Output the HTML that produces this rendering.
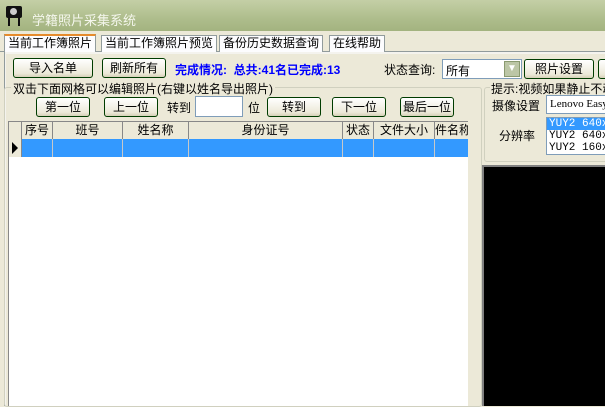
<!DOCTYPE html>
<html><head><meta charset="utf-8"><style>
*{margin:0;padding:0;box-sizing:border-box}
body{width:605px;height:406px;overflow:hidden;background:#ece9d8;font-family:"Liberation Sans","Noto Sans CJK SC","WenQuanYi Zen Hei",sans-serif;font-size:12px;position:relative;color:#000}
.a{position:absolute;white-space:nowrap}
.title{left:0;top:0;width:605px;height:31px;background:linear-gradient(#c4cfa6,#aebd8c 60%,#a3b380);}
.btn{position:absolute;height:20px;border:1px solid #003c00;border-radius:3px;background:linear-gradient(#fff,#ece9d8 80%,#d6d0b8);text-align:center;line-height:18px;font-size:12px}
.tab{position:absolute;top:35px;height:17px;border:1px solid #919b9c;border-bottom:none;background:#fcfcfe;line-height:15px;padding:0 3px;font-size:12px}
.grp{position:absolute;border:1px solid #d0d0bf;border-radius:3px}
.hd{position:absolute;top:0;height:17px;border-right:1px solid #888;text-align:center;line-height:16px;background:#ece9d8}
.cl{position:absolute;top:17px;height:18px;border-right:1px solid #c8c8c8}
</style></head><body>
<div class="a title"></div>
<div class="a" style="left:6px;top:6px;width:16px;height:12px;background:#111;border-radius:2px"></div>
<div class="a" style="left:10px;top:8px;width:7px;height:7px;background:#ccc;border-radius:50%"></div>
<div class="a" style="left:8px;top:18px;width:2px;height:8px;background:#111"></div>
<div class="a" style="left:18px;top:18px;width:2px;height:8px;background:#111"></div>
<div class="a" style="left:32px;top:10px;color:#f4f6ec;font-size:13px">学籍照片采集系统</div>
<div class="a" style="left:0;top:51px;width:605px;height:1px;background:#919b9c"></div>
<div class="tab" style="left:4px;top:34px;height:18px;border-top:2px solid #e68b2c;z-index:2">当前工作簿照片</div>
<div class="tab" style="left:101px">当前工作簿照片预览</div>
<div class="tab" style="left:219px">备份历史数据查询</div>
<div class="tab" style="left:329px">在线帮助</div>
<div class="a" style="left:4px;top:52px;width:601px;height:354px;border-left:1px solid #919b9c;background:#f4f3ee"></div>
<div class="a" style="left:6px;top:54px;width:599px;height:352px;background:#ece9d8"></div>
<div class="btn" style="left:13px;top:58px;width:80px">导入名单</div>
<div class="btn" style="left:102px;top:58px;width:64px">刷新所有</div>
<div class="a" style="left:175px;top:61px;color:#0000ff;font-weight:bold;font-size:12px">完成情况:&nbsp; 总共:41名已完成:13</div>
<div class="a" style="left:384px;top:61px">状态查询:</div>
<div class="a" style="left:442px;top:59px;width:80px;height:20px;background:#fff;border:1px solid #7f9db9;padding:2px 3px">所有</div>
<div class="a" style="left:504px;top:61px;width:16px;height:16px;background:#bcc6a6;border:1px solid #8a9a70;color:#fff;text-align:center;line-height:14px;font-size:10px">▼</div>
<div class="btn" style="left:524px;top:59px;width:70px">照片设置</div>
<div class="btn" style="left:598px;top:59px;width:20px"></div>
<div class="grp" style="left:4px;top:87px;width:478px;height:320px"></div>
<div class="a" style="left:11px;top:80px;background:#ece9d8;padding:0 2px">双击下面网格可以编辑照片(右键以姓名导出照片)</div>
<div class="btn" style="left:36px;top:97px;width:54px">第一位</div>
<div class="btn" style="left:104px;top:97px;width:54px">上一位</div>
<div class="a" style="left:167px;top:99px">转到</div>
<div class="a" style="left:195px;top:96px;width:48px;height:21px;background:#fff;border:1px solid #7f9db9"></div>
<div class="a" style="left:248px;top:99px">位</div>
<div class="btn" style="left:267px;top:97px;width:54px">转到</div>
<div class="btn" style="left:332px;top:97px;width:54px">下一位</div>
<div class="btn" style="left:400px;top:97px;width:54px">最后一位</div>
<div class="a" style="left:8px;top:121px;width:460px;height:285px;background:#fff;border-left:1px solid #888;border-top:1px solid #888;overflow:hidden">
 <div class="hd" style="left:0;width:13px"></div>
 <div class="hd" style="left:13px;width:31px">序号</div>
 <div class="hd" style="left:44px;width:70px">班号</div>
 <div class="hd" style="left:114px;width:66px">姓名称</div>
 <div class="hd" style="left:180px;width:154px">身份证号</div>
 <div class="hd" style="left:334px;width:31px">状态</div>
 <div class="hd" style="left:365px;width:61px">文件大小</div>
 <div class="hd" style="left:426px;width:40px;text-align:left">件名称</div>
 <div class="a" style="left:0;top:17px;width:13px;height:18px;background:#ece9d8;border-right:1px solid #888"></div>
 <div class="a" style="left:3px;top:20px;width:0;height:0;border-top:6px solid transparent;border-bottom:6px solid transparent;border-left:6px solid #000"></div>
 <div class="a" style="left:13px;top:17px;width:460px;height:18px;background:#3399ff"></div>
 <div class="cl" style="left:13px;width:31px"></div>
 <div class="cl" style="left:44px;width:70px"></div>
 <div class="cl" style="left:114px;width:66px"></div>
 <div class="cl" style="left:180px;width:154px"></div>
 <div class="cl" style="left:334px;width:31px"></div>
 <div class="cl" style="left:365px;width:61px"></div>
</div>
<div class="grp" style="left:484px;top:87px;width:130px;height:75px"></div>
<div class="a" style="left:490px;top:80px;background:#ece9d8;padding:0 1px">提示:视频如果静止不动</div>
<div class="a" style="left:492px;top:97px">摄像设置</div>
<div class="a" style="left:546px;top:95px;width:70px;height:19px;background:#fff;border:1px solid #7f9db9;padding:2px 3px;font-family:'Liberation Serif',serif;font-size:11px">Lenovo Easy</div>
<div class="a" style="left:499px;top:127px">分辨率</div>
<div class="a" style="left:546px;top:117px;width:70px;height:38px;background:#fff;border:1px solid #7f9db9;font-family:'Liberation Mono',monospace;font-size:11px;line-height:12px">
<div style="background:#3399ff;color:#fff;padding-left:2px">YUY2 640x</div><div style="padding-left:2px">YUY2 640x</div><div style="padding-left:2px">YUY2 160x</div></div>
<div class="a" style="left:482px;top:165px;width:123px;height:241px;background:#000;border-left:2px solid #808080;border-top:2px solid #808080"></div>
</body></html>
